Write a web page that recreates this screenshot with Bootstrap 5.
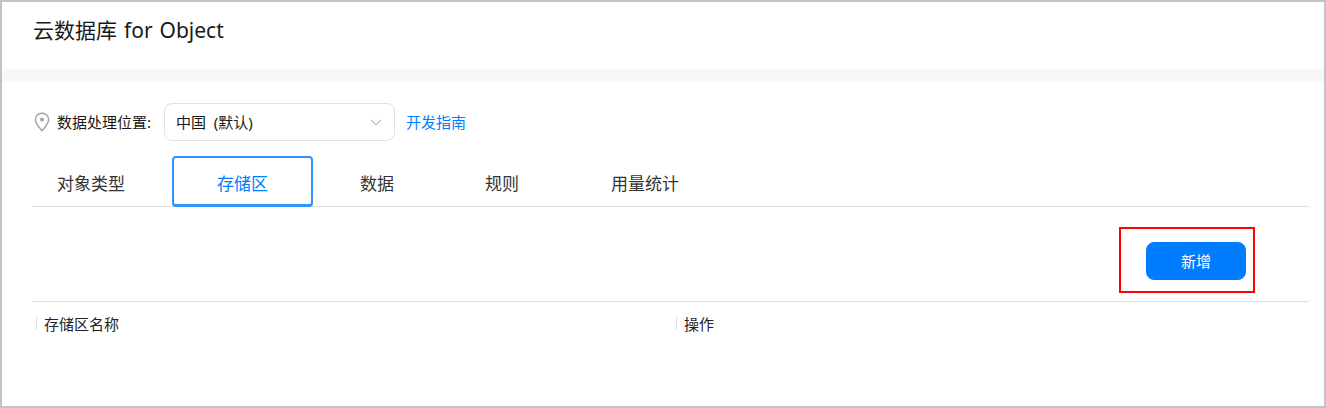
<!DOCTYPE html>
<html lang="zh-CN">
  <head>
    <meta charset="utf-8" />
    <title>云数据库 for Object</title>
    <link href="https://cdn.jsdelivr.net/npm/bootstrap@5.3.0/dist/css/bootstrap.min.css" rel="stylesheet">
    <script src="https://cdn.jsdelivr.net/npm/bootstrap@5.3.0/dist/js/bootstrap.bundle.min.js"></script>
    <meta name="viewport" content="width=device-width, initial-scale=1">
    <style>
      html, body { height: 100%; }
      body {
        font-family: "Noto Sans", "Noto Sans CJK SC", sans-serif;
        color: #191919;
        background: #fff;
      }
      .page-frame { height: 408px; border: 2px solid #c2c2c2; overflow: hidden; }
      .page-head { height: 67px; padding: 14px 31px 0; font-size: 21px; line-height: 28px; word-spacing: 1.5px; }
      .page-gap { height: 13px; background: #f7f7f7; }
      .page-body { padding: 0 15px 0 30px; }

      .region-row { height: 74px; padding-top: 21px; font-size: 15px; }
      .pin-icon { width: 16px; height: 20px; margin-left: 2px; margin-right: 7px; }
      .region-select {
        width: 231px; height: 38px; margin-left: 13px; padding: 0 12px 0 11px;
        border: 1px solid #e0e0e8; border-radius: 8px; font-size: 15px;
      }
      .guide-link { margin-left: 11px; color: #007dff; text-decoration: none; }

      .tab-strip { height: 51px; border-bottom: 1px solid #e0e0e0; font-size: 17px; white-space: nowrap; }
      .tab-item { padding: 15px 45px 0 46px; color: #333; height: 50px; }
      .tab-item:first-child { padding-left: 25px; padding-right: 47px; }
      .tab-item:nth-child(3) { padding-left: 47px; }
      .tab-item:last-child { padding-left: 47px; }
      .tab-item.on {
        color: #007dff; border: 2px solid #2e93ff; border-radius: 4px;
        border-bottom-width: 3px; padding: 13px 0 0; height: 51px; width: 141px; text-align: center;
      }

      .action-row { height: 95px; border-bottom: 1px solid #e0e0e0; padding-top: 20px; padding-right: 54px; }
      .mark-box { border: 2px solid #f00; width: 136px; height: 66px; padding: 13px 7px 0 25px; }
      .add-btn {
        --bs-btn-bg: #007dff; --bs-btn-border-color: #007dff;
        --bs-btn-hover-bg: #007dff; --bs-btn-hover-border-color: #007dff;
        --bs-btn-color: #fff; --bs-btn-hover-color: #fff;
        width: 100px; height: 38px; border-radius: 8px; font-size: 15px; padding: 0;
      }

      .list-head { font-size: 15px; color: #222; padding-top: 15px; padding-left: 4px; }
      .list-cell { border-left: 1px solid #ddd; height: 13px; line-height: 15px; padding-left: 7px; }
      .name-cell { width: 640px; }
    </style>
  </head>
  <body>
    <div class="page-frame">
      <div class="page-head">云数据库 for Object</div>
      <div class="page-gap"></div>
      <div class="page-body">

        <div class="region-row d-flex align-items-start">
          <div class="d-flex align-items-center" style="height:38px">
            <svg class="pin-icon" viewBox="0 0 16 20" fill="none">
              <path d="M8 1.2C4.2 1.2 1.4 4.1 1.4 7.7c0 4 3.9 7.7 6.6 11 2.7-3.3 6.6-7 6.6-11 0-3.6-2.8-6.5-6.6-6.5z" stroke="#a3a3a3" stroke-width="1.4"/>
              <circle cx="8" cy="7.6" r="2" fill="#a3a3a3"/>
            </svg>
            <span>数据处理位置:</span>
          </div>
          <div class="region-select d-flex align-items-center justify-content-between">
            <span>中国&nbsp;&nbsp;(默认)</span>
            <svg width="12" height="7" viewBox="0 0 12 7" fill="none">
              <path d="M1 1l5 5 5-5" stroke="#bdbdbd" stroke-width="1.1"/>
            </svg>
          </div>
          <a class="guide-link d-flex align-items-center" style="height:38px" href="#">开发指南</a>
        </div>

        <div class="tab-strip d-flex">
          <div class="tab-item">对象类型</div>
          <div class="tab-item on">存储区</div>
          <div class="tab-item">数据</div>
          <div class="tab-item">规则</div>
          <div class="tab-item">用量统计</div>
        </div>

        <div class="action-row d-flex justify-content-end align-items-start">
          <div class="mark-box">
            <button type="button" class="btn add-btn">新增</button>
          </div>
        </div>

        <div class="list-head d-flex">
          <div class="list-cell name-cell">存储区名称</div>
          <div class="list-cell">操作</div>
        </div>

      </div>
    </div>
  </body>
</html>
